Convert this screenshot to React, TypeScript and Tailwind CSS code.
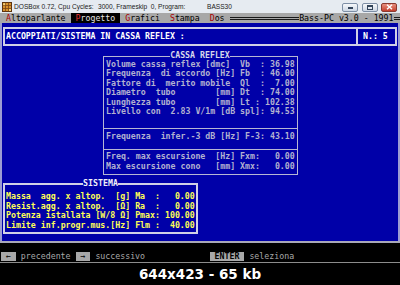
import React from "react";

const MONO = "font-['DejaVu_Sans_Mono',monospace] text-[8.25px] whitespace-pre";

const cassaA = [
  "Volume cassa reflex [dmc]  Vb  : 36.98",
  "Frequenza  di accordo [Hz] Fb  : 46.00",
  "Fattore di  merito mobile  Ql  :  7.00",
  "Diametro  tubo        [mm] Dt  : 74.00",
  "Lunghezza tubo        [mm] Lt : 102.38",
  "Livello con  2.83 V/1m [dB spl]: 94.53",
];
const cassaB = "Frequenza  infer.-3 dB [Hz] F-3: 43.10";
const cassaC = [
  "Freq. max escursione  [Hz] Fxm:   0.00",
  "Max escursione cono   [mm] Xmx:   0.00",
];
const sistema = [
  "Massa  agg. x altop.  [g] Ma  :   0.00",
  "Resist.agg. x altop.  [Ω] Ra  :   0.00",
  "Potenza istallata [W/8 Ω] Pmax: 100.00",
  "Limite inf.progr.mus.[Hz] Flm :  40.00",
];

function TitleBar() {
  return (
    <div className="h-[13px] shrink-0 bg-[#e6ebf1] flex items-start font-['Liberation_Sans',Arial,sans-serif] text-[6.6px] text-[#1a1a1a]">
      <svg className="ml-[2px] mt-[1.5px] w-[10px] h-[10px]" viewBox="0 0 10 10">
        <rect x="0.5" y="0.5" width="9" height="9" fill="#d9922e" stroke="#5c3410" />
        <path d="M0.5 3.5H9.5M0.5 6.5H9.5M3.5 0.5V9.5M6.5 0.5V9.5" stroke="#7a4616" strokeWidth="0.8" />
        <rect x="1.2" y="1.2" width="2" height="2" fill="#f3d27a" />
        <rect x="7" y="7" width="2" height="2" fill="#f3d27a" />
      </svg>
      <div className="ml-[2px] flex leading-[13px] whitespace-pre">
        <span className="w-[84px]">DOSBox 0.72, Cpu Cycles:</span>
        <span className="w-[109px]">3000, Frameskip  0, Program:</span>
        <span>BASS30</span>
      </div>
      <div className="ml-auto mr-[3px] mt-[2.5px] flex">
        <div className="w-[16px] h-[9px] rounded-[2px] border border-[#7d8ea5] bg-linear-to-b from-[#f6f8fb] to-[#cdd7e4] flex items-end justify-center pb-[1.5px]">
          <div className="w-[5px] h-[2px] bg-[#33445a]" />
        </div>
        <div className="ml-[4px] w-[16px] h-[9px] rounded-[2px] border border-[#7d8ea5] bg-linear-to-b from-[#f6f8fb] to-[#cdd7e4] flex items-center justify-center">
          <div className="w-[6px] h-[5px] border border-t-2 border-[#33445a]" />
        </div>
        <div className="ml-[3px] w-[16px] h-[9px] rounded-[2px] border border-[#8a3a30] bg-linear-to-b from-[#e8907f] to-[#c43d2c] flex items-center justify-center">
          <svg width="7" height="6" viewBox="0 0 7 6">
            <path d="M1 0.8L6 5.2M6 0.8L1 5.2" stroke="#ffffff" strokeWidth="1.5" />
          </svg>
        </div>
      </div>
    </div>
  );
}

function MenuBar() {
  return (
    <div className={`h-[10px] shrink-0 bg-[#a8a8a8] flex items-center pl-[1px] text-black leading-[10px] ${MONO}`}>
      <span> </span>
      <span className="text-[#a80000]">A</span>
      <span>ltoparlante </span>
      <span className="h-[10px] bg-black text-[#e4e4e4]">
        {" "}
        <span className="text-[#e03030]">P</span>rogetto{" "}
      </span>
      <span> </span>
      <span className="text-[#a80000]">G</span>
      <span>rafici  </span>
      <span className="text-[#a80000]">S</span>
      <span>tampa  </span>
      <span className="text-[#a80000]">D</span>
      <span>os </span>
      <div className="w-[69.6px] h-[3px] border-y border-[#1a1a1a]" />
      <span>Bass-PC v3.0 - 1991</span>
      <div className="flex-1 h-[3px] border-y border-[#1a1a1a]" />
    </div>
  );
}

function Header() {
  return (
    <div className="mx-[1px] h-[19px] border-2 border-[#d0d0e6] flex text-white font-bold leading-[15px]">
      <div className="flex-1 pl-[1px]">ACCOPPIATI/SISTEMA IN CASSA REFLEX :</div>
      <div className="w-[39px] border-l-2 border-[#d0d0e6] pl-[5px]">N.: 5</div>
    </div>
  );
}

function Cassa() {
  return (
    <div className="mt-[6px] self-center w-[195px] text-[#b2b2d0] font-bold">
      <div className="flex h-[7.5px] items-stretch">
        <div className="flex-1 mt-[4px] border-t border-l border-[#b6b6d4]" />
        <div className="leading-[7px] text-[#d8d8ea]">CASSA REFLEX</div>
        <div className="flex-1 mt-[4px] border-t border-r border-[#b6b6d4]" />
      </div>
      <div className="border-x border-b border-[#b6b6d4]">
        <div className="pl-[2.5px] pb-[11.4px]">
          {cassaA.map((t) => (
            <div key={t} className="h-[9.6px] leading-[9.6px]">
              {t}
            </div>
          ))}
        </div>
        <div className="border-t border-[#b6b6d4] pl-[2.5px] pt-[2.7px] pb-[7.7px]">
          <div className="h-[9.6px] leading-[9.6px]">{cassaB}</div>
        </div>
        <div className="border-t border-[#b6b6d4] pl-[2.5px] pt-[1.7px] pb-[3.1px]">
          {cassaC.map((t) => (
            <div key={t} className="h-[9.6px] leading-[9.6px]">
              {t}
            </div>
          ))}
        </div>
      </div>
    </div>
  );
}

function Sistema() {
  return (
    <div className="mt-[5px] ml-[1px] w-[195px] text-[#ffff55] font-bold">
      <div className="flex h-[7px] items-stretch">
        <div className="flex-1 mt-[2.5px] border-t-2 border-l-2 border-[#d0d0e6]" />
        <div className="leading-[6px] text-[#f0f0f8]">SISTEMA</div>
        <div className="flex-1 mt-[2.5px] border-t-2 border-r-2 border-[#d0d0e6]" />
      </div>
      <div className="border-x-2 border-b-2 border-[#d0d0e6] pl-[1px] pt-[4.65px] pb-[1px]">
        {sistema.map((t) => (
          <div key={t} className="h-[9.7px] leading-[9.7px]">
            {t}
          </div>
        ))}
      </div>
    </div>
  );
}

function BottomBar() {
  return (
    <div className={`h-[19px] shrink-0 bg-black pt-[9px] pl-[1px] flex items-start leading-[9px] ${MONO}`}>
      <div className="h-[9px] bg-[#a8a8a8] text-black"> ← </div>
      <div className="text-[#a8a8a8]"> precedente </div>
      <div className="h-[9px] bg-[#a8a8a8] text-black"> → </div>
      <div className="text-[#a8a8a8]"> successivo</div>
      <div className="w-[64.6px]" />
      <div className="h-[9px] bg-[#a8a8a8] text-black font-bold"> ENTER </div>
      <div className="text-[#a8a8a8]"> seleziona</div>
    </div>
  );
}

export default function App() {
  return (
    <div className="w-[400px] h-[285px] bg-black overflow-hidden flex flex-col">
      <TitleBar />
      <MenuBar />
      <div className={`h-[218px] shrink-0 bg-[#0000a8] border-l-2 border-r-2 border-[#9c9cd4] flex flex-col pt-[4px] ${MONO}`}>
        <Header />
        <Cassa />
        <Sistema />
      </div>
      <div className="h-[2px] shrink-0 bg-[#a8a8b8]" />
      <BottomBar />
      <div className="h-[1px] shrink-0 bg-[#8c8c8c]" />
      <div className="flex-1 flex items-center justify-center text-white font-bold text-[13.5px] font-['DejaVu_Sans',Verdana,sans-serif]">
        644x423 - 65 kb
      </div>
    </div>
  );
}
